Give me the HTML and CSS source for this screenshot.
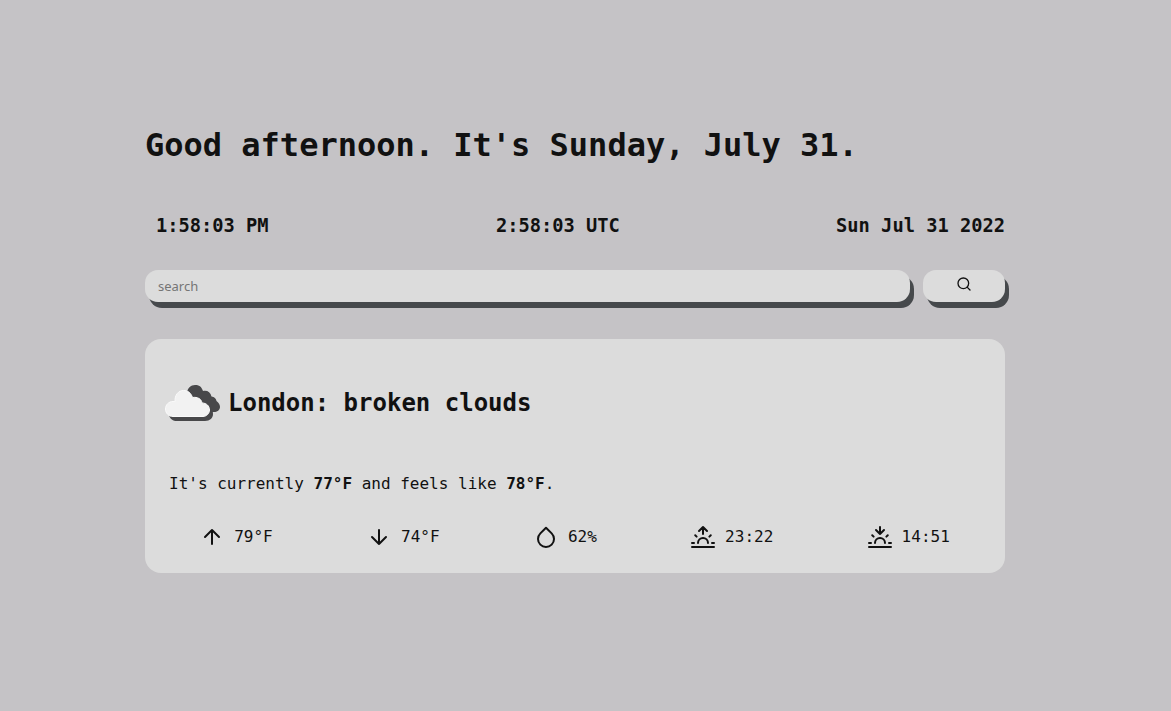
FILE: index.html
```html
<!DOCTYPE html>
<html lang="en">
<head>
<meta charset="utf-8">
<meta name="viewport" content="width=device-width, initial-scale=1">
<title>Start page</title>
<link rel="stylesheet" href="styles.css">
</head>
<body>
<main class="page">
  <h1 class="greeting">Good afternoon. It's Sunday, July 31.</h1>
  <div class="clocks">
    <h3 class="clock clock-indent">1:58:03 PM</h3>
    <h3 class="clock clock-indent">2:58:03 UTC</h3>
    <h3 class="clock">Sun Jul 31 2022</h3>
  </div>
  <form class="search">
    <input class="search-box raised" type="text" placeholder="search" aria-label="search">
    <button class="search-button raised" type="submit" aria-label="Search">
      <svg class="icon icon-small" viewBox="0 0 24 24"><circle cx="11" cy="11" r="8"/><path d="M21 21l-4.35-4.35"/></svg>
    </button>
  </form>
  <section class="weather">
    <div class="summary">
      <svg class="cloud" viewBox="0 0 56 38" aria-hidden="true">
        <path class="cloud-back" d="M22 10C22 4 26 1 30 1c4 0 6.500 1.500 8 6 4-1 7.500 1 8.500 5.500 3 .5 4.500 2 5 4.500 2.500 2 3.500 4 3.500 6 0 3-3 5-6 5H30z"/>
        <path class="cloud-shadow" d="M4 31c1 4 4 6 8 6h28c5 0 8-3 8-7 0-3-1-5-3-7l-7-8-10-9-18 21z"/>
        <path class="cloud-front" d="M8 32.500c-4.500 0-7.500-3.500-7.500-7.500s3-7.500 7.500-7.500c.8 0 1.500 0 2 .2C9.500 11 13.500 6.500 18.500 6.500c4.500 0 7.500 2.500 9 7 5-.8 9 1.500 9.500 5.500 4.500 0 7.500 3 7.500 7 0 3.500-3 6.500-6.500 6.500z"/>
      </svg>
      <h2 class="place">London: broken clouds</h2>
    </div>
    <p class="current">It's currently <b>77°F</b> and feels like <b>78°F</b>.</p>
    <div class="stats">
      <div class="stat"><svg class="icon" viewBox="0 0 24 24"><path d="M12 19V5M5 12l7-7 7 7"/></svg><span>79°F</span></div>
      <div class="stat"><svg class="icon" viewBox="0 0 24 24"><path d="M12 5v14M19 12l-7 7-7-7"/></svg><span>74°F</span></div>
      <div class="stat"><svg class="icon" viewBox="0 0 24 24"><path d="M12 2.69l5.66 5.66a8 8 0 1 1-11.31 0z"/></svg><span>62%</span></div>
      <div class="stat"><svg class="icon" viewBox="0 0 24 24"><path d="M17 18a5 5 0 0 0-10 0M12 2v7M4.22 10.22l1.42 1.42M1 18h2M21 18h2M18.36 11.64l1.42-1.42M23 22H1M8 6l4-4 4 4"/></svg><span>23:22</span></div>
      <div class="stat"><svg class="icon" viewBox="0 0 24 24"><path d="M17 18a5 5 0 0 0-10 0M12 9V2M4.22 10.22l1.42 1.42M1 18h2M21 18h2M18.36 11.64l1.42-1.42M23 22H1M16 5l-4 4-4-4"/></svg><span>14:51</span></div>
    </div>
  </section>
</main>
</body>
</html>
```
FILE: styles.css
```css
* { box-sizing: border-box; }
body {
  margin: 0;
  min-height: 100vh;
  background: #c5c3c6;
  color: #111;
  font: 16px/20px "DejaVu Sans Mono", monospace;
}
.page {
  max-width: 1193px;
  margin: 0 auto;
  padding: 126px 166px 0 145px;
}
.greeting { margin: 0; font-size: 32px; line-height: 38px; }
.clocks {
  display: flex;
  justify-content: space-between;
  margin-top: 51px;
}
.clock { margin: 0; font-size: 1.17em; line-height: 22px; }
.clock-indent { padding-left: 11px; }
.search { display: flex; gap: 13px; margin-top: 33px; }
.raised {
  height: 32px;
  border: 0;
  border-radius: 13px;
  background: #dcdcdc;
  box-shadow: 4px 6px #46494c;
  color: #111;
}
.search-box {
  flex: 1;
  min-width: 0;
  padding: 0 13px;
  font: 13px "Noto Sans", sans-serif;
}
.search-box::placeholder { color: #757575; }
.search-button {
  display: flex;
  justify-content: center;
  width: 82px;
  padding: 6px;
}
.icon {
  flex: none;
  width: 24px;
  height: 24px;
  fill: none;
  stroke: #111;
  stroke-width: 2;
  stroke-linecap: round;
  stroke-linejoin: round;
}
.icon-small { width: 16px; height: 16px; }
.weather {
  margin-top: 37px;
  padding: 45px 8px 24px;
  border-radius: 16px;
  background: #dcdcdc;
}
.summary {
  display: flex;
  align-items: center;
  gap: 7px;
  padding-left: 12px;
}
.cloud { width: 56px; height: 38px; }
.cloud-back { fill: #48484a; }
.cloud-shadow { fill: #48484a; }
.cloud-front { fill: #f2f2f2; stroke: #fafafa; }
.place { margin: 0; font-size: 24px; line-height: 28px; }
.current { margin: 52px 16px 0; }
.stats {
  display: flex;
  justify-content: space-around;
  margin-top: 31px;
}
.stat { display: flex; align-items: center; gap: 10px; }
```
